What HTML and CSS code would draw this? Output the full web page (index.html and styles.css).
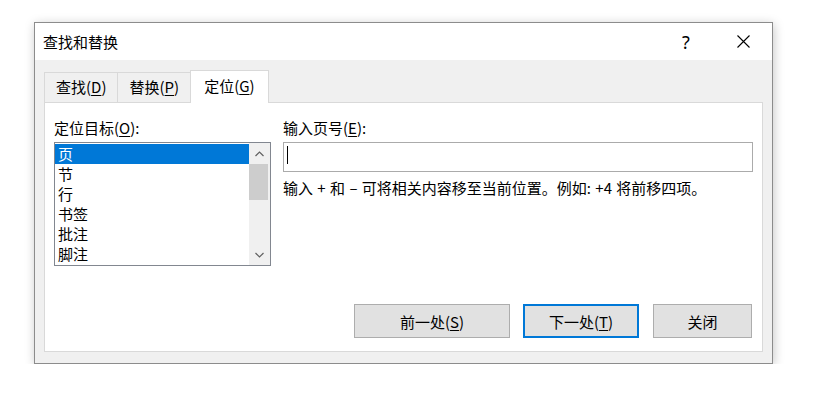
FILE: index.html
```html
<!DOCTYPE html>
<html>
<head>
    <title>查找和替换</title>
    <link rel="stylesheet" href="styles.css">
</head>
<body>
    <div class="page">
        <div class="dialog">
            <div class="titlebar">
                <span class="title">查找和替换</span>
                <span class="help">?</span>
                <span class="close">
                    <svg width="13" height="13" viewBox="0 0 13 13">
                        <path d="M0.5 0.5 L12.5 12.5 M12.5 0.5 L0.5 12.5" stroke="#000" stroke-width="1.1" fill="none"/>
                    </svg>
                </span>
            </div>
            <div class="body">
                <div class="tabs">
                    <div class="tab">查找(<u>D</u>)</div>
                    <div class="tab">替换(<u>P</u>)</div>
                    <div class="tab active">定位(<u>G</u>)</div>
                </div>
                <div class="panel">
                    <div class="fields">
                        <div class="col-target">
                            <div class="label">定位目标(<u>O</u>):</div>
                            <div class="listbox">
                                <ul class="items">
                                    <li class="selected">页</li>
                                    <li>节</li>
                                    <li>行</li>
                                    <li>书签</li>
                                    <li>批注</li>
                                    <li>脚注</li>
                                </ul>
                                <div class="scrollbar">
                                    <div class="arrow">
                                        <svg width="9" height="6" viewBox="0 0 9 6"><path d="M0.5 5 L4.5 1 L8.5 5" stroke="#606060" stroke-width="1.2" fill="none"/></svg>
                                    </div>
                                    <div class="track"><div class="thumb"></div></div>
                                    <div class="arrow">
                                        <svg width="9" height="6" viewBox="0 0 9 6"><path d="M0.5 1 L4.5 5 L8.5 1" stroke="#606060" stroke-width="1.2" fill="none"/></svg>
                                    </div>
                                </div>
                            </div>
                        </div>
                        <div class="col-page">
                            <div class="label">输入页号(<u>E</u>):</div>
                            <div class="textbox"><span class="caret"></span></div>
                            <p class="hint">输入 + 和 – 可将相关内容移至当前位置。例如: +4 将前移四项。</p>
                        </div>
                    </div>
                    <div class="actions">
                        <button class="btn btn-prev">前一处(<u>S</u>)</button>
                        <button class="btn btn-next">下一处(<u>T</u>)</button>
                        <button class="btn btn-close">关闭</button>
                    </div>
                </div>
            </div>
        </div>
    </div>
</body>
</html>
```

FILE: styles.css
```css
body {
    margin: 0;
    background-color: white;
    color: black;
    font-family: "Noto Sans CJK SC", "Noto Sans", sans-serif;
    font-size: 15px;
}
u {
    text-decoration-thickness: 1px;
    text-underline-offset: 2px;
}
.page {
    padding: 22px 0 0 34px;
}
.dialog {
    box-sizing: border-box;
    width: 739px;
    height: 342px;
    border: 1px solid #8c8c8c;
    box-shadow: 1px 2px 10px rgba(0, 0, 0, 0.22);
    display: flex;
    flex-direction: column;
    background-color: #f0f0f0;
}
.titlebar {
    height: 37px;
    background-color: white;
    display: flex;
    align-items: center;
    padding-left: 8px;
}
.title {
    flex: 1;
    line-height: 20px;
}
.help {
    width: 34px;
    text-align: center;
    margin-right: 17px;
    font-family: "Noto Sans", sans-serif;
    font-size: 18px;
}
.close {
    width: 46px;
    margin-right: 6px;
    display: flex;
    justify-content: center;
}
.body {
    flex: 1;
    display: flex;
    flex-direction: column;
    padding: 10px 9px 11px 9px;
}
.tabs {
    display: flex;
    align-items: flex-end;
    height: 32px;
}
.tab {
    box-sizing: border-box;
    height: 30px;
    line-height: 28px;
    padding: 0 11px;
    border: 1px solid #d9d9d9;
    border-bottom: none;
    margin-right: -1px;
}
.tab.active {
    height: 33px;
    line-height: 30px;
    padding: 0 13px;
    background-color: white;
    margin-bottom: -1px;
    position: relative;
    z-index: 1;
}
.panel {
    flex: 1;
    display: flex;
    flex-direction: column;
    background-color: white;
    border: 1px solid #d9d9d9;
    padding: 15px 9px 13px 9px;
}
.fields {
    display: flex;
    gap: 12px;
}
.label {
    line-height: 20px;
    margin-bottom: 4px;
}
.col-target {
    width: 217px;
}
.col-page {
    flex: 1;
}
.listbox {
    box-sizing: border-box;
    height: 124px;
    border: 1px solid #828790;
    display: flex;
}
.items {
    flex: 1;
    list-style: none;
    margin: 0;
    padding: 1px 0 0 0;
}
.items li {
    height: 20px;
    line-height: 20px;
    padding-left: 3px;
}
.items li.selected {
    background-color: #0078d7;
    color: white;
}
.scrollbar {
    width: 21px;
    background-color: #f0f0f0;
    display: flex;
    flex-direction: column;
}
.arrow {
    height: 21px;
    display: flex;
    align-items: center;
    justify-content: center;
}
.track {
    flex: 1;
}
.thumb {
    width: 19px;
    height: 36px;
    background-color: #cdcdcd;
}
.textbox {
    box-sizing: border-box;
    height: 30px;
    border: 1px solid #ababab;
    padding: 3px 0 0 3px;
}
.caret {
    display: block;
    width: 1px;
    height: 18px;
    background-color: black;
}
.hint {
    margin: 6px 0 0 0;
    line-height: 20px;
    word-spacing: 1px;
}
.actions {
    margin-top: auto;
    display: flex;
    justify-content: flex-end;
    gap: 13px;
    padding-right: 1px;
}
.btn {
    box-sizing: border-box;
    height: 34px;
    background-color: #e1e1e1;
    border: 1px solid #adadad;
    font-family: "Noto Sans CJK SC", "Noto Sans", sans-serif;
    font-size: 15px;
    color: black;
    padding: 0;
}
.btn-prev {
    width: 156px;
}
.btn-next {
    width: 116px;
    border: 2px solid #0078d7;
}
.btn-close {
    width: 99px;
    margin-left: 1px;
}
```
